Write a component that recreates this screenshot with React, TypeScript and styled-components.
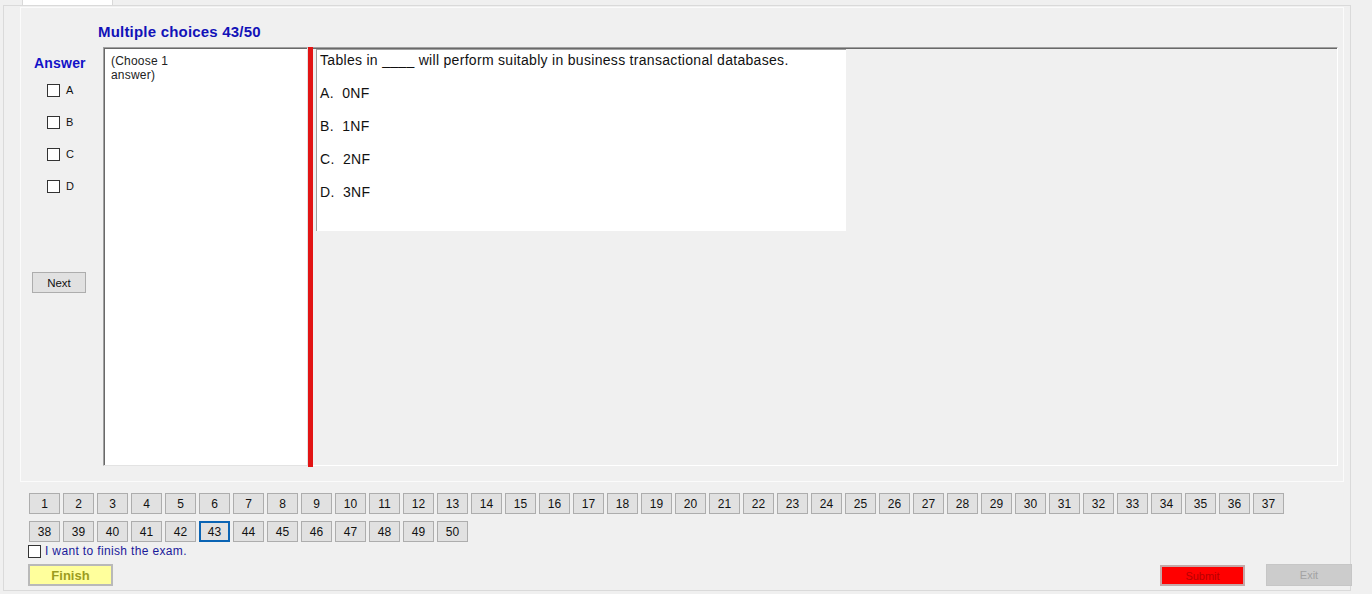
import React from "react";
import styled, { createGlobalStyle } from "styled-components";

const Global = createGlobalStyle`
  html, body {
    margin: 0;
    padding: 0;
    background: #f0f0f0;
    font-family: "Liberation Sans", Arial, sans-serif;
  }
  #root { width: 1372px; height: 594px; overflow: hidden; }
`;

const Root = styled.div`
  width: 1372px;
  height: 594px;
  padding-left: 3px;
  box-sizing: border-box;
  background: #f0f0f0;
`;

const TabStrip = styled.div`
  height: 5px;
  display: flex;
`;

const Tab = styled.div`
  margin-left: 19px;
  width: 89px;
  height: 5px;
  background: #ffffff;
  border-right: 1px solid #d9d9d9;
  border-left: 1px solid #d9d9d9;
`;

const TabPage = styled.div`
  width: 1348px;
  height: 586px;
  box-sizing: border-box;
  border: 1px solid #dadada;
  padding-top: 1px;
  display: flex;
  flex-direction: column;
`;

const InnerPanel = styled.div`
  margin-left: 16px;
  width: 1324px;
  height: 475px;
  box-sizing: border-box;
  border: 1px solid #fbfbfb;
  display: flex;
  flex-direction: column;
`;

const Title = styled.div`
  margin-top: 16px;
  padding-left: 77px;
  height: 16px;
  line-height: 16px;
  font-size: 15px;
  letter-spacing: 0.2px;
  font-weight: bold;
  color: #1212b8;
`;

const MainRow = styled.div`
  margin-top: 7px;
  height: 420px;
  display: flex;
  padding-right: 5px;
`;

const LeftCol = styled.div`
  width: 82px;
  flex: none;
  display: flex;
  flex-direction: column;
`;

const AnswerLabel = styled.div`
  margin-top: 8px;
  padding-left: 13px;
  height: 16px;
  line-height: 16px;
  font-size: 14px;
  letter-spacing: 0.2px;
  font-weight: bold;
  color: #1212c8;
`;

const OptionList = styled.div`
  margin-top: 3px;
  display: flex;
  flex-direction: column;
`;

const OptionRow = styled.label`
  height: 32px;
  display: flex;
  align-items: center;
  padding-left: 26px;
  gap: 6px;
  font-size: 11px;
  color: #111;
`;

const Box = styled.span<{ $size?: number }>`
  display: inline-block;
  width: ${(p) => p.$size ?? 13}px;
  height: ${(p) => p.$size ?? 13}px;
  box-sizing: border-box;
  border: 1px solid #333333;
  background: #ffffff;
  flex: none;
`;

const NextButton = styled.button`
  margin-top: 70px;
  margin-left: 11px;
  width: 54px;
  height: 21px;
  box-sizing: border-box;
  border: 1px solid #adadad;
  background: #e1e1e1;
  font-family: "Liberation Sans", Arial, sans-serif;
  font-size: 11.5px;
  color: #111;
  padding: 0;
`;

const ChooseBox = styled.div`
  width: 205px;
  height: 419px;
  flex: none;
  box-sizing: border-box;
  background: #ffffff;
  border-top: 1px solid #a0a0a0;
  border-left: 1px solid #a0a0a0;
  border-right: 1px solid #e3e3e3;
  border-bottom: 1px solid #e3e3e3;
  box-shadow: inset 1px 1px 0 #696969;
  padding: 6px 6px 0 7px;
  font-size: 12px;
  letter-spacing: 0.2px;
  line-height: 14px;
  color: #222;
  white-space: pre-line;
`;

const RedBar = styled.div`
  width: 5px;
  height: 420px;
  flex: none;
  background: #e21414;
`;

const QuestionArea = styled.div`
  flex: 1;
  height: 419px;
  box-sizing: border-box;
  border-top: 1px solid #a0a0a0;
  box-shadow: inset 0 1px 0 #696969;
  border-right: 1px solid #ffffff;
  border-bottom: 1px solid #ffffff;
  padding: 1px 0 0 3px;
`;

const QuestionBox = styled.div`
  width: 530px;
  height: 182px;
  box-sizing: border-box;
  background: #ffffff;
  border-top: 1px solid #a0a0a0;
  border-left: 1px solid #a0a0a0;
  padding: 2px 4px 0 3px;
  display: flex;
  flex-direction: column;
  gap: 17px;
`;

const QLine = styled.p`
  margin: 0;
  font-size: 14px;
  letter-spacing: 0.3px;
  line-height: 16px;
  color: #111;
  white-space: pre;
`;

const Footer = styled.div`
  margin-top: 11px;
  padding-left: 25px;
  display: flex;
  flex-direction: column;
`;

const PageRow = styled.div<{ $top?: number }>`
  display: flex;
  gap: 3px;
  margin-top: ${(p) => p.$top ?? 0}px;
`;

const PageButton = styled.button<{ $active?: boolean }>`
  width: 31px;
  height: 21px;
  box-sizing: border-box;
  padding: 0;
  background: #e1e1e1;
  border: ${(p) => (p.$active ? "2px solid #0a64b4" : "1px solid #adadad")};
  font-family: "Liberation Sans", Arial, sans-serif;
  font-size: 12px;
  color: #111;
`;

const FinishCheck = styled.label`
  margin-top: 2px;
  margin-left: -1px;
  display: flex;
  align-items: center;
  gap: 4px;
  height: 14px;
  font-size: 12px;
  letter-spacing: 0.35px;
  color: #1a1a9a;
`;

const ActionRow = styled.div`
  margin-top: 6px;
  margin-left: -1px;
  display: flex;
  align-items: flex-start;
  margin-right: -2px;
`;

const FinishButton = styled.button`
  width: 85px;
  height: 22px;
  box-sizing: border-box;
  background: #ffff9c;
  border: 2px solid #b9b9b9;
  font-family: "Liberation Sans", Arial, sans-serif;
  font-size: 13px;
  font-weight: bold;
  color: #9c9c1e;
  padding: 0;
`;

const Spacer = styled.div`
  flex: 1;
`;

const SubmitButton = styled.button`
  margin-top: 1px;
  width: 85px;
  height: 21px;
  box-sizing: border-box;
  background: #ff0000;
  border: 2px solid #c4a8a8;
  font-family: "Liberation Sans", Arial, sans-serif;
  font-size: 11px;
  color: #b80000;
  padding: 0;
`;

const ExitButton = styled.button`
  margin-left: 21px;
  width: 86px;
  height: 22px;
  box-sizing: border-box;
  background: #cccccc;
  border: 1px solid #c6c6c6;
  font-family: "Liberation Sans", Arial, sans-serif;
  font-size: 11px;
  color: #a3a3a3;
  padding: 0;
`;

const row1 = Array.from({ length: 37 }, (_, i) => i + 1);
const row2 = Array.from({ length: 13 }, (_, i) => i + 38);

export default function App() {
  return (
    <>
      <Global />
      <Root>
        <TabStrip>
          <Tab />
        </TabStrip>
        <TabPage>
          <InnerPanel>
            <Title>Multiple choices 43/50</Title>
            <MainRow>
              <LeftCol>
                <AnswerLabel>Answer</AnswerLabel>
                <OptionList>
                  {["A", "B", "C", "D"].map((l) => (
                    <OptionRow key={l}>
                      <Box />
                      {l}
                    </OptionRow>
                  ))}
                </OptionList>
                <NextButton>Next</NextButton>
              </LeftCol>
              <ChooseBox>{"(Choose 1\nanswer)"}</ChooseBox>
              <RedBar />
              <QuestionArea>
                <QuestionBox>
                  <QLine>Tables in ____ will perform suitably in business transactional databases.</QLine>
                  <QLine>{"A.  0NF"}</QLine>
                  <QLine>{"B.  1NF"}</QLine>
                  <QLine>{"C.  2NF"}</QLine>
                  <QLine>{"D.  3NF"}</QLine>
                </QuestionBox>
              </QuestionArea>
            </MainRow>
          </InnerPanel>
          <Footer>
            <PageRow>
              {row1.map((n) => (
                <PageButton key={n}>{n}</PageButton>
              ))}
            </PageRow>
            <PageRow $top={7}>
              {row2.map((n) => (
                <PageButton key={n} $active={n === 43}>
                  {n}
                </PageButton>
              ))}
            </PageRow>
            <FinishCheck>
              <Box />
              I want to finish the exam.
            </FinishCheck>
            <ActionRow>
              <FinishButton>Finish</FinishButton>
              <Spacer />
              <SubmitButton>Submit</SubmitButton>
              <ExitButton>Exit</ExitButton>
            </ActionRow>
          </Footer>
        </TabPage>
      </Root>
    </>
  );
}
